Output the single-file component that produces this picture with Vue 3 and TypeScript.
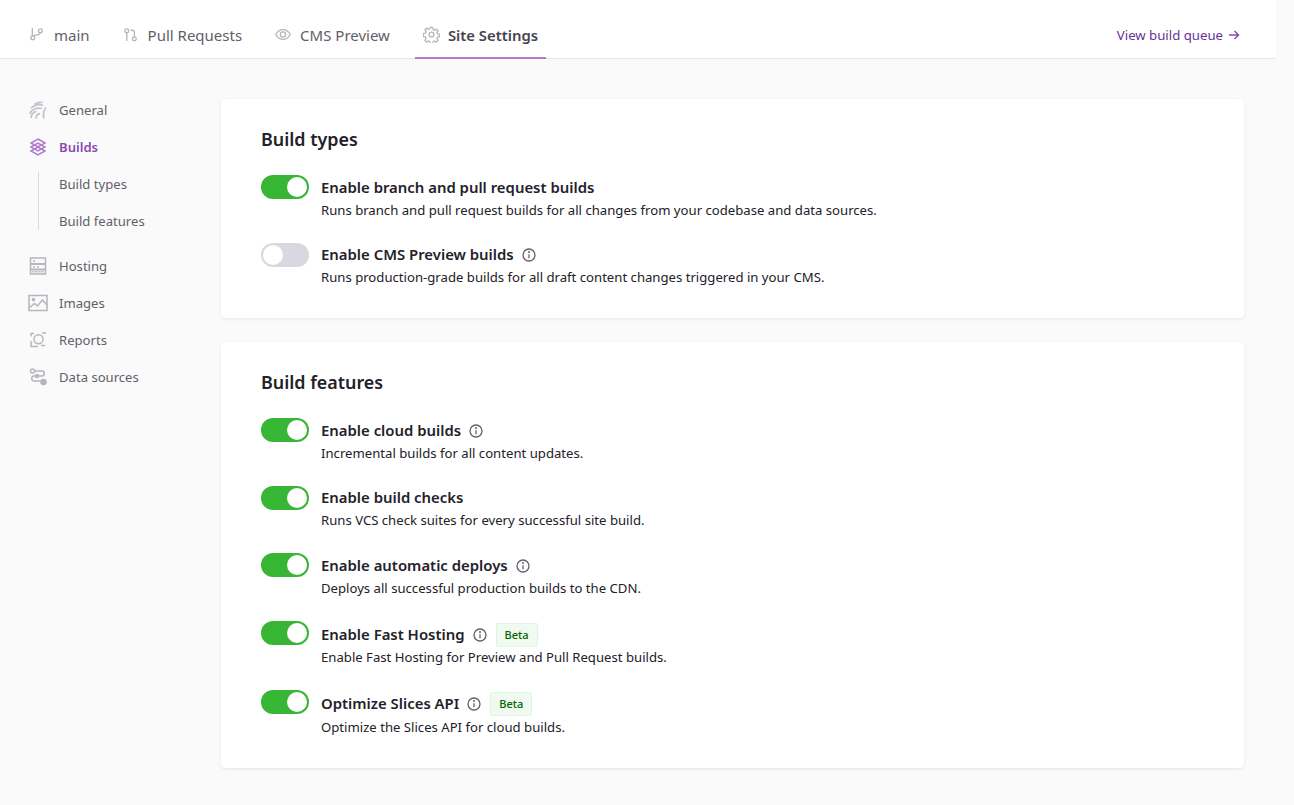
<script setup lang="ts">
interface Setting {
  title: string
  text: string
  on: boolean
  info?: boolean
  beta?: boolean
}

const tabs = [
  { label: 'main', icon: 'branch' },
  { label: 'Pull Requests', icon: 'pull' },
  { label: 'CMS Preview', icon: 'eye' },
  { label: 'Site Settings', icon: 'gear', active: true },
]

const navTop = [
  { label: 'General', icon: 'general' },
  { label: 'Builds', icon: 'layers', active: true },
]
const navSub = ['Build types', 'Build features']
const navBottom = [
  { label: 'Hosting', icon: 'hosting' },
  { label: 'Images', icon: 'images', wide: true },
  { label: 'Reports', icon: 'reports' },
  { label: 'Data sources', icon: 'data' },
]

const sections: { title: string; rows: Setting[] }[] = [
  {
    title: 'Build types',
    rows: [
      { title: 'Enable branch and pull request builds', text: 'Runs branch and pull request builds for all changes from your codebase and data sources.', on: true },
      { title: 'Enable CMS Preview builds', text: 'Runs production-grade builds for all draft content changes triggered in your CMS.', on: false, info: true },
    ],
  },
  {
    title: 'Build features',
    rows: [
      { title: 'Enable cloud builds', text: 'Incremental builds for all content updates.', on: true, info: true },
      { title: 'Enable build checks', text: 'Runs VCS check suites for every successful site build.', on: true },
      { title: 'Enable automatic deploys', text: 'Deploys all successful production builds to the CDN.', on: true, info: true },
      { title: 'Enable Fast Hosting', text: 'Enable Fast Hosting for Preview and Pull Request builds.', on: true, info: true, beta: true },
      { title: 'Optimize Slices API', text: 'Optimize the Slices API for cloud builds.', on: true, info: true, beta: true },
    ],
  },
]

const icons: Record<string, string> = {
  branch: '<circle cx="4" cy="12.500" r="2"/><circle cx="12" cy="5" r="2"/><path d="M3.500 2v8.500M12 7c0 4-7 1.500-7.500 3.700"/>',
  pull: '<circle cx="4" cy="5" r="2"/><circle cx="12" cy="13.500" r="2"/><path d="M4 7v9M12 11.500V7c0-1.500-1-2.500-2.500-2.500H8"/>',
  eye: '<path d="M.8 9C2.700 5.500 5.400 3.800 8.500 3.800s5.800 1.700 7.700 5.200c-1.900 3.500-4.600 5.200-7.700 5.200S2.700 12.500.8 9z"/><circle cx="8.500" cy="9" r="2.800"/>',
  gear: '<circle cx="9" cy="9" r="2.600"/><path d="M7.700 1.500h2.600l.4 2.200 1.500.7 1.900-1.200 1.800 1.800-1.200 1.900.7 1.500 2.100.4v2.600l-2.100.4-.7 1.500 1.200 1.900-1.800 1.800-1.900-1.200-1.500.7-.4 2.200H7.700l-.4-2.200-1.500-.7-1.900 1.200-1.800-1.800 1.200-1.900-.7-1.500-2.100-.4V7.900l2.100-.4.7-1.500-1.200-1.900 1.800-1.800 1.900 1.200 1.500-.7z"/>',
  general: '<g stroke="#c4c2ca" stroke-width="1.700"><path d="M5.500 3.500C8 1.500 11 1 13.500 1.500M2 7.500C5 4 9.500 3 14 4.200M.8 13C2.500 8.500 8 6 13 7.500M2 17c.2-3.500 2.500-6 5.500-6.500M7 17.500c0-2.500 1.500-4.500 4-4.800M16.800 6.500c-2.300 3-2.800 7-1.800 11"/></g>',
  layers: '<path d="M9 1l7 4-7 4-7-4z"/><path d="M2 9l7-4 7 4-7 4z"/><path d="M2 13l7-4 7 4-7 4z"/>',
  hosting: '<rect x="1.500" y="1" width="15" height="16"/><path d="M1.500 7h15M1.500 12.500h15" stroke-width="1.800"/><path d="M4 4h2.500M4 10h2M8 10h2M3.500 14.800h11" stroke-dasharray="2 1"/>',
  images: '<rect x="1" y="1.500" width="18" height="15"/><circle cx="5.500" cy="5.500" r="1.100"/><path d="M1 14l5.500-4.500 3 2.500 5-6 4.500 5"/>',
  reports: '<circle cx="9.500" cy="8.300" r="4.500"/><path d="M2 5.500v-3h3M2 10v5.500h7M12 14.500h4M13 2h4"/>',
  data: '<circle cx="3.500" cy="3" r="2"/><path d="M5.500 3H13c3 0 3 5 0 5H5c-3 0-3 5 0 5h7"/><circle cx="8" cy="8" r="1.500"/><circle cx="14.500" cy="14" r="2.500" fill="currentColor"/>',
}
</script>

<template>
  <div class="page">
    <header class="topbar">
      <nav class="tabs">
        <a v-for="tab in tabs" :key="tab.label" class="tab" :class="{ active: tab.active }">
          <svg class="tab-icon" viewBox="0 0 18 18" v-html="icons[tab.icon]"></svg>
          {{ tab.label }}
        </a>
      </nav>
      <a class="queue">
        View build queue
        <svg class="arrow" viewBox="0 0 12 12"><path d="M1 6h9.500M6.500 2l4 4-4 4" /></svg>
      </a>
    </header>

    <div class="body">
      <aside class="side">
        <a v-for="item in navTop" :key="item.label" class="nav" :class="{ active: item.active }">
          <svg class="nav-icon" viewBox="0 0 18 18" v-html="icons[item.icon]"></svg>
          {{ item.label }}
        </a>
        <div class="sub">
          <a v-for="item in navSub" :key="item" class="sub-item">{{ item }}</a>
        </div>
        <a v-for="item in navBottom" :key="item.label" class="nav">
          <svg v-if="item.wide" class="nav-icon wide" viewBox="0 0 20 18" v-html="icons[item.icon]"></svg>
          <svg v-else class="nav-icon" viewBox="0 0 18 18" v-html="icons[item.icon]"></svg>
          {{ item.label }}
        </a>
      </aside>

      <main class="content">
        <section v-for="section in sections" :key="section.title" class="card">
          <h2>{{ section.title }}</h2>
          <div v-for="row in section.rows" :key="row.title" class="row">
            <span class="toggle" :class="{ on: row.on }"><i></i></span>
            <div class="row-text">
              <div class="row-title" :class="{ tall: row.beta }">
                <strong>{{ row.title }}</strong>
                <svg v-if="row.info" class="info" viewBox="0 0 14 14">
                  <circle cx="7" cy="7" r="6" />
                  <path d="M7 6.200v4" />
                  <circle class="dot" cx="7" cy="4" r="1" />
                </svg>
                <span v-if="row.beta" class="badge">Beta</span>
              </div>
              <p>{{ row.text }}</p>
            </div>
          </div>
        </section>
      </main>
    </div>
  </div>
</template>

<style>
body {
  background: #fafafa;
}
</style>

<style scoped>
.page {
  min-height: 805px;
  font-family: "Noto Sans", "Open Sans", sans-serif;
  color: #232129;
}

.topbar {
  display: flex;
  align-items: flex-end;
  justify-content: space-between;
  width: 1276px;
  height: 58px;
  box-sizing: content-box;
  background: #fff;
  border-bottom: 1px solid #e6e6ea;
}

.tabs {
  display: flex;
  gap: 17px;
  margin-left: 21px;
}

.tab {
  display: flex;
  align-items: center;
  gap: 8px;
  height: 47px;
  margin-bottom: -1px;
  padding: 0 8px;
  font-size: 15px;
  color: #635e69;
  border-bottom: 2px solid transparent;
  box-sizing: border-box;
}

.tab.active {
  font-weight: 600;
  font-size: 14.85px;
  color: #48434f;
  border-bottom-color: #b17acc;
}

.tab-icon,
.nav-icon {
  flex: none;
  fill: none;
  stroke: #b7b5bd;
  stroke-width: 1.4;
  color: #b7b5bd;
}

.tab-icon {
  width: 17px;
  height: 17px;
}

.queue {
  display: flex;
  align-items: center;
  gap: 5px;
  height: 47px;
  margin-right: 36px;
  font-size: 13.2px;
  color: #663399;
}

.arrow {
  width: 12px;
  height: 12px;
  fill: none;
  stroke: #8a4baf;
  stroke-width: 1.5;
}

.body {
  display: flex;
  align-items: flex-start;
}

.side {
  display: flex;
  flex-direction: column;
  flex: none;
  width: 221px;
  padding: 32px 0 0 29px;
  box-sizing: border-box;
}

.nav {
  display: flex;
  align-items: center;
  gap: 12px;
  height: 37px;
  font-size: 13.1px;
  color: #635e69;
}

.nav.active {
  font-weight: 600;
  color: #8a4baf;
}

.nav.active .nav-icon {
  stroke: #b17acc;
  stroke-width: 1.5;
}

.nav-icon {
  width: 18px;
  height: 18px;
  stroke-width: 1.5;
}

.nav-icon.wide {
  width: 20px;
  margin: 0 -1px;
}

.sub {
  position: relative;
  display: flex;
  flex-direction: column;
  margin: 0 0 8px 9px;
  padding-left: 21px;
}

.sub::before {
  content: "";
  position: absolute;
  left: 0;
  top: 7px;
  bottom: 9px;
  width: 1px;
  background: #d9d7e0;
}

.sub-item {
  display: flex;
  align-items: center;
  height: 37px;
  font-size: 13.1px;
  color: #635e69;
}

.content {
  display: flex;
  flex-direction: column;
  gap: 24.2px;
  width: 1023px;
  padding-top: 40.4px;
}

.card {
  padding: 27px 40px 30px;
  background: #fff;
  border-radius: 4px;
  box-shadow: 0 1px 3px rgba(46, 41, 51, 0.1);
}

h2 {
  margin: 0 0 22.6px;
  font-size: 17.9px;
  line-height: 26px;
  font-weight: 600;
}

.row {
  display: flex;
  gap: 12px;
  margin-bottom: 22px;
}

.row:last-child {
  margin-bottom: 0;
}

.toggle {
  flex: none;
  display: flex;
  align-items: center;
  width: 48px;
  height: 24px;
  padding: 0 2px;
  box-sizing: border-box;
  border-radius: 12px;
  background: #d9d7e0;
}

.toggle i {
  width: 20px;
  height: 20px;
  border-radius: 50%;
  background: #fff;
}

.toggle.on {
  justify-content: flex-end;
  background: #37b635;
}

.row-title {
  display: flex;
  align-items: center;
  height: 23.6px;
}

.row-title.tall {
  height: 25.6px;
}

.row-title strong {
  font-size: 14.9px;
  font-weight: 600;
}

.info {
  width: 14px;
  height: 14px;
  margin: 2px 0 0 8px;
  fill: none;
  stroke: #635e69;
  stroke-width: 1.3;
}

.info .dot {
  fill: #635e69;
  stroke: none;
}

.badge {
  margin: 2px 0 0 9px;
  padding: 0 8px;
  font-size: 11px;
  line-height: 22px;
  font-weight: 500;
  color: #006500;
  background: #f1faf1;
  border: 1px solid #def5de;
  border-radius: 2px;
}

p {
  margin: 0;
  font-size: 13.15px;
  line-height: 22px;
}
</style>
